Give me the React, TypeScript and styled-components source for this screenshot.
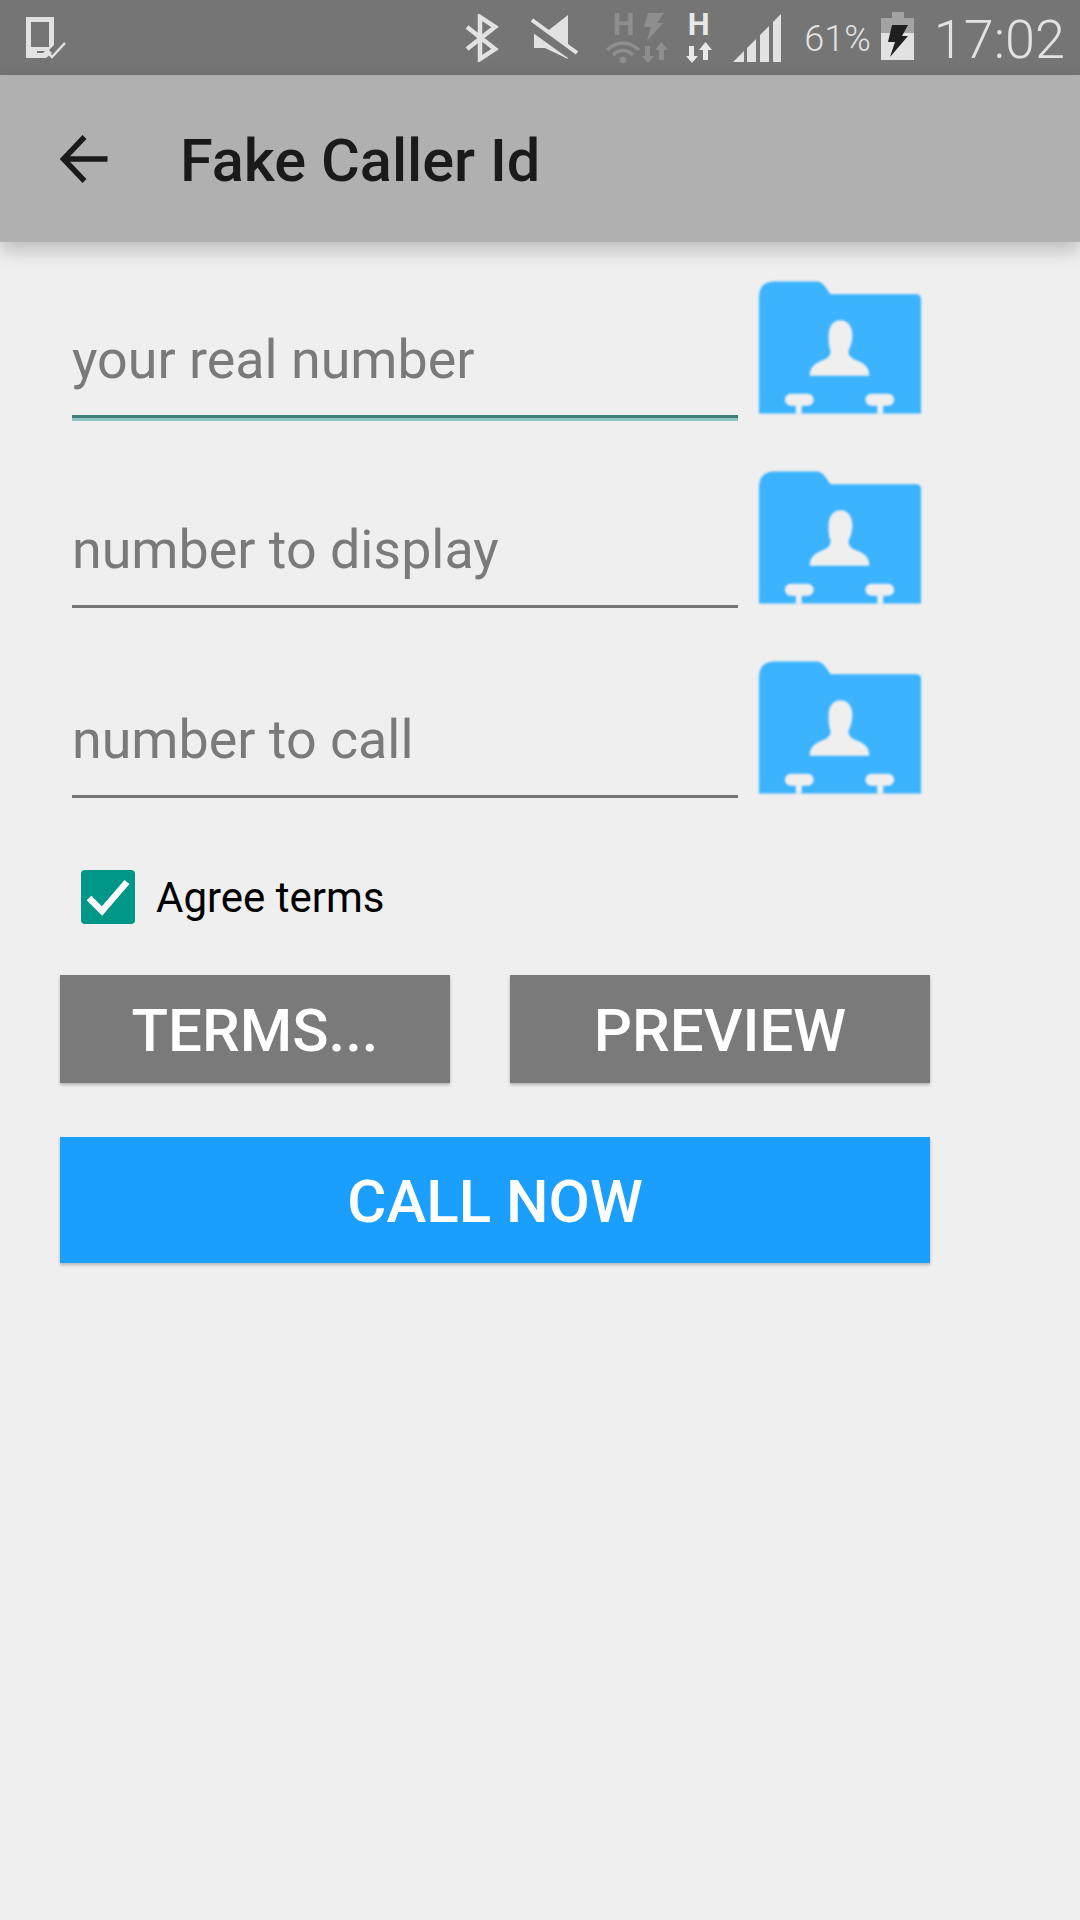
import styled, { createGlobalStyle } from 'styled-components'

const GlobalStyle = createGlobalStyle`
  html, body {
    margin: 0;
    padding: 0;
    background: #efefef;
    font-family: Roboto, "Liberation Sans", sans-serif;
  }
`

const DeviceIcon = () => (
  <LeftIcon width="41" height="44" viewBox="0 0 41 44">
    <path fillRule="evenodd" fill="#e2e2e2" d="M1 1H29V29L24 34L27 37L21 42H1ZM6 6V31H24V6ZM12 35V37H18L20 35Z" />
    <path d="M22 36L27 41L40 27" fill="none" stroke="#e2e2e2" strokeWidth="2.5" />
  </LeftIcon>
)

const BluetoothIcon = () => (
  <StatusIcon $gap={0} width="34" height="48" viewBox="0 0 34 48">
    <path d="M2 13L30 35L15 45V3L30 13L2 35" fill="none" stroke="#e2e2e2" strokeWidth="4.5" />
  </StatusIcon>
)

const MuteIcon = () => (
  <StatusIcon $gap={32} width="47" height="45" viewBox="0 0 47 45">
    <path d="M3 18H14L37 0V44L14 33H3Z" fill="#e2e2e2" />
    <path d="M0 11L46 44" stroke="#757575" strokeWidth="9" />
    <path d="M1 5L46 38" stroke="#e2e2e2" strokeWidth="4" />
  </StatusIcon>
)

const DownUpArrows = ({ color }: { color: string }) => (
  <svg width="27" height="21" viewBox="0 0 27 21" style={{ display: 'block' }}>
    <g fill={color}>
      <path d="M4 4H9V14H13L7 21L1 14H4Z" />
      <path d="M18 18H23V8H27L20.5 0L14 8H18Z" />
    </g>
  </svg>
)

const DimNetworkIcon = () => (
  <NetworkGroup $gap={28}>
    <NetworkColumn>
      <NetworkLetter $dim>H</NetworkLetter>
      <svg width="35" height="23" viewBox="0 0 35 23" style={{ display: 'block' }}>
        <g fill="none" stroke="#8e8e8e" strokeWidth="3.5">
          <path d="M1 10Q17 -4 33 10" />
          <path d="M7 15Q17 6 27 15" />
        </g>
        <circle cx="17" cy="20" r="3.2" fill="#8e8e8e" />
      </svg>
    </NetworkColumn>
    <NetworkColumn>
      <svg width="27" height="29" viewBox="0 0 27 29" style={{ display: 'block' }}>
        <path d="M7 0H23L16 10H22L6 28L10 14H3Z" fill="#8e8e8e" />
      </svg>
      <DownUpArrows color="#8e8e8e" />
    </NetworkColumn>
  </NetworkGroup>
)

const DataIcon = () => (
  <NetworkGroup $gap={17}>
    <NetworkColumn>
      <NetworkLetter>H</NetworkLetter>
      <DataArrows>
        <DownUpArrows color="#e8e8e8" />
      </DataArrows>
    </NetworkColumn>
  </NetworkGroup>
)

const SignalIcon = () => (
  <StatusIcon $gap={21} width="48" height="48" viewBox="0 0 48 48">
    <path d="M0 48L11 37V48ZM14 34L23 25V48H14ZM27 21L36 12V48H27ZM40 8L48 0V48H40Z" fill="#e2e2e2" />
  </StatusIcon>
)

const BatteryIcon = () => (
  <Battery width="33" height="48" viewBox="0 0 33 48">
    <path d="M11 0H23V6H33V21H0V6H11Z" fill="#a3a3a3" />
    <rect y="21" width="33" height="27" fill="#e2e2e2" />
    <path d="M11 13H27L21 24H27L9 45L14 30H7Z" fill="#1f1f1f" />
  </Battery>
)

const ContactsIcon = () => (
  <Contacts width="162" height="133" viewBox="0 0 163 133">
    <path d="M0 16Q0 0 16 0H58Q63 0 67 6L72 13H158Q163 13 163 18V133H0Z" fill="#3bb3ff" />
    <path
      d="M82 39C89 39 94 45 94 54C94 60 92 66 90 70C90 76 94 78 102 81C108 84 111 88 111 95H51C51 88 54 84 60 81C68 78 72 76 72 70C70 66 70 60 70 54C70 45 75 39 82 39Z"
      fill="#efefef"
    />
    <g fill="#efefef">
      <rect x="26" y="113" width="29" height="12" rx="6" />
      <rect x="37" y="122" width="6" height="11" />
      <rect x="107" y="113" width="29" height="12" rx="6" />
      <rect x="119" y="122" width="6" height="11" />
    </g>
  </Contacts>
)

const fields = [
  { label: 'your real number', focused: true },
  { label: 'number to display', focused: false },
  { label: 'number to call', focused: false },
]

export default function App() {
  return (
    <Screen>
      <GlobalStyle />
      <StatusBar>
        <DeviceIcon />
        <StatusRight>
          <BluetoothIcon />
          <MuteIcon />
          <DimNetworkIcon />
          <DataIcon />
          <SignalIcon />
          <Percent>61%</Percent>
          <BatteryIcon />
          <Clock>17:02</Clock>
        </StatusRight>
      </StatusBar>
      <AppBar>
        <BackArrow width="48" height="48" viewBox="0 0 47 48">
          <path d="M47 24H4M24 2L3 24L24 46" fill="none" stroke="#1a1a1a" strokeWidth="5.5" />
        </BackArrow>
        <Title>Fake Caller Id</Title>
      </AppBar>
      <Form>
        {fields.map((field) => (
          <FieldRow key={field.label}>
            <Field $focused={field.focused}>{field.label}</Field>
            <ContactsIcon />
          </FieldRow>
        ))}
        <AgreeRow>
          <CheckBox>
            <svg width="54" height="54" viewBox="0 0 54 54">
              <path d="M8 28L21 41L46 12" fill="none" stroke="#fff" strokeWidth="6.5" />
            </svg>
          </CheckBox>
          <AgreeLabel>Agree terms</AgreeLabel>
        </AgreeRow>
        <ButtonRow>
          <GreyButton $width={390}>TERMS...</GreyButton>
          <GreyButton $width={420}>PREVIEW</GreyButton>
        </ButtonRow>
        <CallButton>CALL NOW</CallButton>
      </Form>
    </Screen>
  )
}

const Screen = styled.div`
  width: 1080px;
  height: 1920px;
  overflow: hidden;
  background: #efefef;
`
//StatusBar styled
const StatusBar = styled.div`
  height: 75px;
  background: #757575;
  display: flex;
  align-items: center;
  padding: 0 15px 0 25px;
`
const LeftIcon = styled.svg`
  display: block;
`
const StatusRight = styled.div`
  margin-left: auto;
  display: flex;
  align-items: center;
`
const StatusIcon = styled.svg<{ $gap: number }>`
  display: block;
  margin-left: ${(p) => p.$gap}px;
`
const Battery = styled.svg`
  display: block;
  margin: 0 0 3px 10px;
`
const NetworkGroup = styled.div<{ $gap: number }>`
  display: flex;
  margin-left: ${(p) => p.$gap}px;
  height: 50px;
`
const NetworkColumn = styled.div`
  display: flex;
  flex-direction: column;
  align-items: center;
  justify-content: space-between;
`
const NetworkLetter = styled.span<{ $dim?: boolean }>`
  font-size: 31px;
  font-weight: 700;
  line-height: 24px;
  color: ${(p) => (p.$dim ? '#8e8e8e' : '#e8e8e8')};
`
const DataArrows = styled.div`
  margin-top: 5px;
`
const Percent = styled.span`
  margin: 3px 0 0 23px;
  font-size: 36px;
  font-weight: 300;
  color: #e2e2e2;
`
const Clock = styled.span`
  margin: 3px 0 0 20px;
  font-size: 54px;
  font-weight: 300;
  color: #e2e2e2;
`
//AppBar styled
const AppBar = styled.div`
  position: relative;
  height: 167px;
  background: #b0b0b0;
  box-shadow: 0 8px 18px rgba(0, 0, 0, 0.22);
  display: flex;
  align-items: center;
  padding-left: 60px;
`
const BackArrow = styled.svg`
  display: block;
  margin-top: 1px;
`
const Title = styled.h1`
  margin: 4px 0 0 72px;
  font-size: 59.5px;
  font-weight: 500;
  color: #1a1a1a;
`
//Form styled
const Form = styled.div`
  padding: 39px 0 0 60px;
`
const FieldRow = styled.div`
  display: flex;
  align-items: flex-start;
  gap: 21px;
  margin: 0 0 53px 12px;
`
const Field = styled.div<{ $focused: boolean }>`
  width: 666px;
  height: 127px;
  display: flex;
  align-items: flex-end;
  padding-bottom: 7px;
  font-size: 53.8px;
  line-height: 96px;
  color: #7a7a7a;
  border-bottom: 3px solid ${(p) => (p.$focused ? '#3f7f78' : '#757575')};
  box-shadow: ${(p) => (p.$focused ? '0 3px 0 #8cc5bd' : 'none')};
`
const Contacts = styled.svg`
  display: block;
  filter: blur(0.8px);
`
const AgreeRow = styled.div`
  display: flex;
  align-items: center;
  gap: 21px;
  margin: 72px 0 51px 21px;
`
const CheckBox = styled.div`
  width: 54px;
  height: 54px;
  border-radius: 4px;
  background: #009688;
`
const AgreeLabel = styled.span`
  font-size: 42px;
  color: #000;
`
const ButtonRow = styled.div`
  display: flex;
  gap: 60px;
  margin-bottom: 54px;
`
const GreyButton = styled.div<{ $width: number }>`
  width: ${(p) => p.$width}px;
  height: 108px;
  padding-top: 2px;
  box-sizing: border-box;
  display: flex;
  align-items: center;
  justify-content: center;
  background: #7a7a7a;
  color: #fff;
  font-size: 60px;
  font-weight: 500;
  box-shadow: 0 2px 3px rgba(0, 0, 0, 0.25);
`
const CallButton = styled.div`
  width: 870px;
  height: 126px;
  padding-top: 2px;
  box-sizing: border-box;
  display: flex;
  align-items: center;
  justify-content: center;
  background: #1a9fff;
  color: #fff;
  font-size: 60px;
  font-weight: 500;
  box-shadow: 0 2px 3px rgba(0, 0, 0, 0.25);
`
